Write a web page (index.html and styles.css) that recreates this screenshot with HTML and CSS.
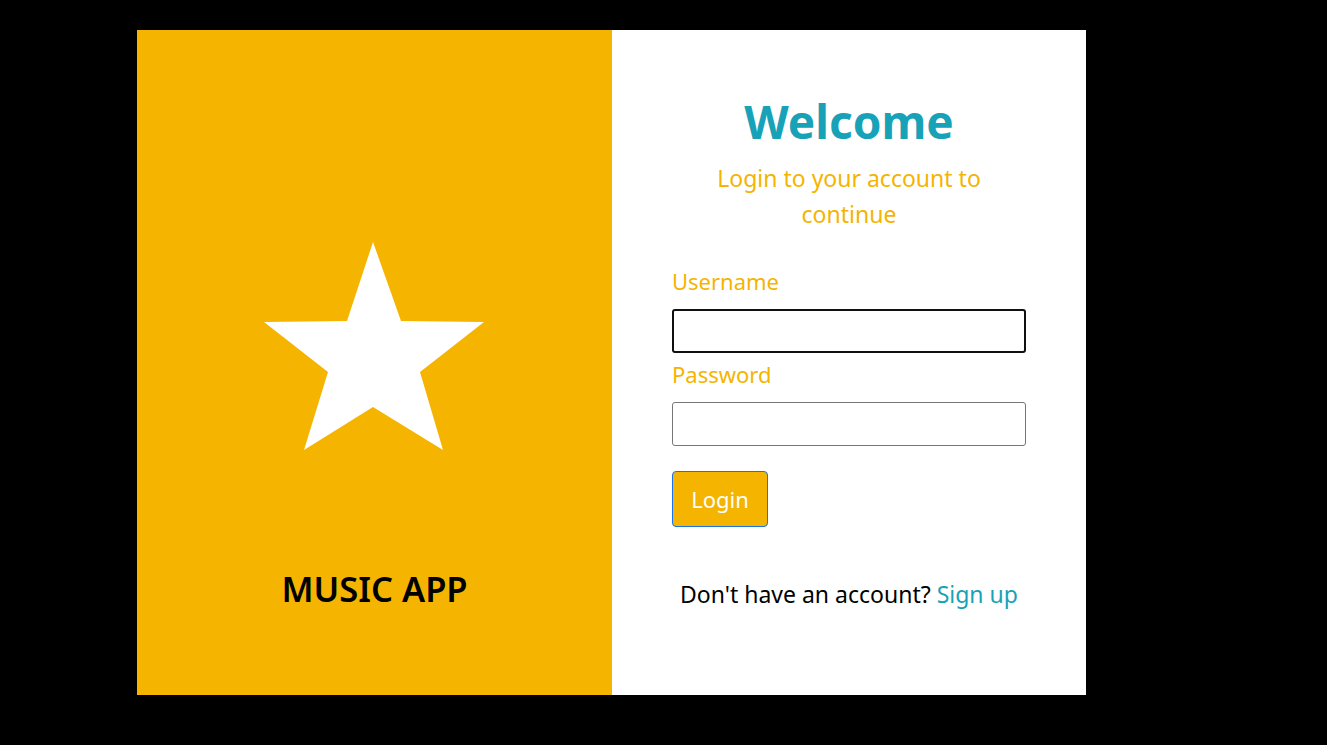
FILE: index.html
```html
<!DOCTYPE html>
<html>
<head>
<meta charset="utf-8">
<link rel="stylesheet" href="styles.css">
</head>
<body>
<div class="page">
  <div class="card">
    <div class="brand">
      <svg class="star" viewBox="0 0 220 209" width="220" height="209">
        <polygon fill="#ffffff" points="109,0 137,79 220,80 156,130 179,208 109,165 40,208 64,130 0,80 83,79"/>
      </svg>
      <div class="brand-name">MUSIC APP</div>
    </div>
    <div class="login">
      <h1 class="title">Welcome</h1>
      <p class="subtitle">Login to your account to<br>continue</p>
      <form class="form">
        <label class="label">Username</label>
        <div class="input input-focus"></div>
        <label class="label">Password</label>
        <div class="input"></div>
        <button type="button" class="btn">Login</button>
      </form>
      <p class="signup">Don't have an account? <a class="link">Sign up</a></p>
    </div>
  </div>
</div>
</body>
</html>
```
FILE: styles.css
```css
html, body {
  margin: 0;
  padding: 0;
  background: #000;
  height: 100%;
}
.page {
  padding: 30px 0 0 137px;
  font-family: "Noto Sans", "Open Sans", sans-serif;
}
.card {
  display: flex;
  width: 949px;
  height: 665px;
}
.brand {
  width: 475px;
  background: #f4b400;
  display: flex;
  flex-direction: column;
  align-items: center;
  padding-top: 212px;
  box-sizing: border-box;
}
.star {
  display: block;
  margin-left: -2px;
}
.brand-name {
  margin-top: 114px;
  font-size: 34.5px;
  font-weight: 600;
  color: #000;
  line-height: 48px;
}
.login {
  width: 474px;
  background: #fff;
  display: flex;
  flex-direction: column;
  align-items: center;
  padding-top: 61px;
  box-sizing: border-box;
}
.title {
  margin: 0;
  font-size: 46px;
  font-weight: 700;
  color: #17a2b8;
  line-height: 60px;
}
.subtitle {
  margin: 9px 0 0;
  font-size: 23px;
  line-height: 36px;
  color: #f4b400;
  text-align: center;
}
.form {
  width: 354px;
  display: flex;
  flex-direction: column;
  align-items: flex-start;
  margin-top: 28px;
}
.label {
  font-size: 22px;
  line-height: 36px;
  color: #f4b400;
  margin-top: 3px;
  margin-bottom: 10px;
}
.input {
  width: 354px;
  height: 44px;
  box-sizing: border-box;
  border: 1px solid #767676;
  border-radius: 3px;
  background: #fff;
}
.input-focus {
  border: 2px solid #101010;
}
.btn {
  margin-top: 25px;
  width: 96px;
  height: 56px;
  background: #f4b400;
  color: #fff;
  border: 1px solid #1a73e8;
  border-radius: 4px;
  font-family: inherit;
  font-size: 22px;
  padding: 0;
}
.signup {
  margin: 51px 0 0;
  font-size: 23px;
  color: #000;
}
.link {
  color: #17a2b8;
}
```
